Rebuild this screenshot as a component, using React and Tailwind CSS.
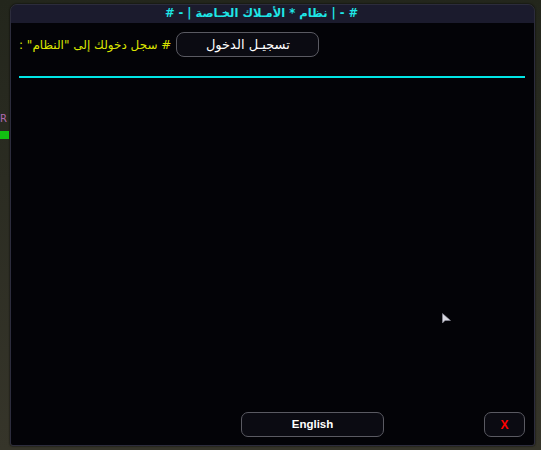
import React from "react";

const AR = { fontFamily: '"DejaVu Sans", "Noto Sans", sans-serif' };
const EN = { fontFamily: '"Liberation Sans", Arial, sans-serif' };

function Cursor() {
  return (
    <svg className="absolute left-[442px] top-[313px]" width="9" height="12" viewBox="0 0 9 12">
      <path d="M0.5 0.5 L0.5 10 L3 7.5 L8.5 7.5 Z" fill="#d8d8e0" stroke="#9090a0" strokeWidth="0.6" />
    </svg>
  );
}

export default function App() {
  return (
    <div className="relative w-[541px] h-[450px] overflow-hidden bg-[linear-gradient(180deg,#23261c_0%,#2b2c22_40%,#36352a_100%)]">
      {/* game hud bits behind the dialog */}
      <div className="absolute left-0 top-[114px] text-[10px] leading-none text-[#b06ab0]" style={AR}>R</div>
      <div className="absolute left-0 top-[131px] w-[9px] h-[8px] bg-[#12c012]" />

      <div className="ml-[10px] mt-[4px] w-[525px] h-[442px] flex flex-col rounded-t-[7px] rounded-b-[3px] overflow-hidden border border-[#2c2c3c] shadow-[0_0_2px_#000]">
        <div
          dir="rtl"
          className="h-[18px] shrink-0 bg-[#1b1b2d] flex items-center justify-center pl-[6px] pr-[28px] text-[11.5px] font-bold text-[#1ee6e6] leading-none"
          style={AR}
        >
          # - | نظام * الأمـلاك الخـاصة | - #
        </div>

        <div className="flex-1 flex flex-col bg-[#030307] px-[8px] pt-[9px] pb-[8px]">
          <div className="flex items-center gap-[5px]">
            <span dir="rtl" className="text-[12px] text-[#dce600] leading-none" style={AR}>
              # سجل دخولك إلى "النظام" :
            </span>
            <div
              dir="rtl"
              className="w-[143px] h-[25px] rounded-[8px] border border-[#5a5a62] bg-[#0b0b12] flex items-center justify-center text-[13px] text-white"
              style={AR}
            >
              تسجيـل الدخول
            </div>
          </div>

          <div className="mt-[19px] mr-[1px] h-[2px] bg-[#00e6e6]" />

          <div className="flex-1" />

          <div className="flex items-center mr-[1px]">
            <div
              className="ml-[222px] w-[143px] h-[25px] rounded-[7px] border border-[#5a5a62] bg-[#0b0b12] flex items-center justify-center text-[11.5px] font-bold text-white"
              style={EN}
            >
              English
            </div>
            <div className="flex-1" />
            <div
              className="w-[41px] h-[25px] rounded-[7px] border border-[#5a5a62] bg-[#0b0b12] flex items-center justify-center text-[12px] font-bold text-[#ff0000]"
              style={EN}
            >
              X
            </div>
          </div>
        </div>
      </div>

      <Cursor />
    </div>
  );
}
